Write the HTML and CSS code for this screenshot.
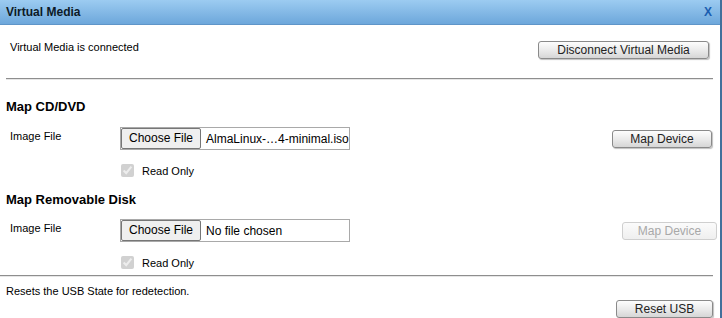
FILE: index.html
```html
<!DOCTYPE html>
<html lang="en">
<head>
    <meta charset="UTF-8">
    <title>Virtual Media</title>
    <link rel="stylesheet" href="styles.css">
</head>
<body>
    <div class="dialog">
        <!-- Title bar -->
        <div class="titlebar">
            <span class="title">Virtual Media</span>
            <span class="close">X</span>
        </div>

        <!-- Connection status -->
        <div class="status-row">
            <span class="status-text">Virtual Media is connected</span>
            <button class="btn btn-disconnect">Disconnect Virtual Media</button>
        </div>
        <div class="rule rule-top"></div>

        <!-- CD/DVD -->
        <h2 class="section-title">Map CD/DVD</h2>
        <div class="map-row">
            <span class="field-label">Image File</span>
            <div class="file-box">
                <span class="file-btn">Choose File</span>
                <span class="file-name">AlmaLinux-…4-minimal.iso</span>
            </div>
            <button class="btn btn-map">Map Device</button>
        </div>
        <label class="check-row">
            <input type="checkbox" checked disabled>
            <span>Read Only</span>
        </label>

        <!-- Removable disk -->
        <h2 class="section-title section-title-2">Map Removable Disk</h2>
        <div class="map-row">
            <span class="field-label">Image File</span>
            <div class="file-box">
                <span class="file-btn">Choose File</span>
                <span class="file-name">No file chosen</span>
            </div>
            <button class="btn btn-map btn-disabled" disabled>Map Device</button>
        </div>
        <label class="check-row">
            <input type="checkbox" checked disabled>
            <span>Read Only</span>
        </label>
        <div class="rule rule-bottom"></div>

        <!-- USB reset -->
        <div class="usb-text">Resets the USB State for redetection.</div>
        <div class="usb-row">
            <button class="btn btn-reset">Reset USB</button>
        </div>
    </div>
</body>
</html>
```

FILE: styles.css
```css
body {
    margin: 0;
    font-family: "Liberation Sans", Arial, sans-serif;
    font-size: 11px;
    color: #000;
    background: #fff;
}

/* Dialog frame */
.dialog {
    width: 722px;
    height: 318px;
    box-sizing: border-box;
    border-right: 2px solid #41709b;
    background: #fff;
    overflow: hidden;
}

.titlebar {
    height: 25px;
    box-sizing: border-box;
    display: flex;
    justify-content: space-between;
    align-items: center;
    padding: 0 8px 0 6px;
    background: linear-gradient(#9ccbf1, #6da7db);
    border-bottom: 1px solid #5f95c8;
}

.title {
    font-size: 12px;
    font-weight: bold;
    color: #0d1a26;
}

.close {
    font-size: 12px;
    font-weight: bold;
    color: #1a5db0;
}

/* Buttons */
.btn {
    height: 18px;
    box-sizing: border-box;
    padding: 0;
    font-family: "Liberation Sans", Arial, sans-serif;
    font-size: 12px;
    line-height: 16px;
    color: #222;
    background: linear-gradient(#fdfdfd, #e9e9e9 55%, #d6d6d6);
    border: 1px solid #8a8a8a;
    border-radius: 3px;
    box-shadow: 1px 1px 1px rgba(0, 0, 0, 0.25);
}

.btn-disabled {
    color: #a8a8a8;
    background: linear-gradient(#fbfbfb, #efefef);
    border-color: #cfcfcf;
    box-shadow: none;
}

.btn-disconnect {
    width: 171px;
    margin-top: 1px;
}

.btn-map {
    width: 100px;
    margin-top: 3px;
    margin-left: auto;
}

.btn-map.btn-disabled {
    width: 95px;
    margin-right: -5px;
}

.btn-reset {
    width: 97px;
    margin-top: 2px;
}

/* Status row */
.status-row {
    display: flex;
    justify-content: space-between;
    align-items: flex-start;
    box-sizing: border-box;
    height: 34px;
    padding: 15px 11px 0 10px;
}

.status-text {
    line-height: 14px;
}

.rule {
    height: 0;
    border-top: 1px solid #8e8e8e;
    border-bottom: 1px solid #e6e6e6;
}

.rule-top {
    margin: 19px 7px 0 6px;
}

.rule-bottom {
    margin: 6px 7px 0 0;
}

/* Map sections */
.section-title {
    margin: 19px 0 0 6px;
    font-size: 13px;
    font-weight: bold;
    line-height: 16px;
}

.section-title-2 {
    margin-top: 15px;
}

.map-row {
    display: flex;
    align-items: flex-start;
    height: 23px;
    margin-top: 12px;
    padding: 0 8px 0 10px;
}

.section-title-2 + .map-row {
    margin-top: 11px;
}

.field-label {
    width: 110px;
    flex-shrink: 0;
    padding-top: 2px;
    line-height: 14px;
}

.file-box {
    width: 230px;
    height: 23px;
    box-sizing: border-box;
    flex-shrink: 0;
    display: flex;
    align-items: center;
    overflow: hidden;
    border: 1px solid #a9a9a9;
    font-size: 12px;
    white-space: nowrap;
}

.file-btn {
    flex-shrink: 0;
    height: 21px;
    box-sizing: border-box;
    padding: 0 7px;
    line-height: 19px;
    background: #efefef;
    border: 1px solid #767676;
    border-radius: 2px;
}

.file-name {
    margin-left: 5px;
}

.check-row {
    display: flex;
    align-items: center;
    height: 13px;
    margin-top: 14px;
    padding-left: 121px;
}

.check-row input {
    width: 13px;
    height: 13px;
    margin: 0 8px 0 0;
}

/* USB reset */
.usb-text {
    margin: 7px 0 0 6px;
    line-height: 14px;
}

.usb-row {
    display: flex;
    justify-content: flex-end;
    padding-right: 7px;
}
```
